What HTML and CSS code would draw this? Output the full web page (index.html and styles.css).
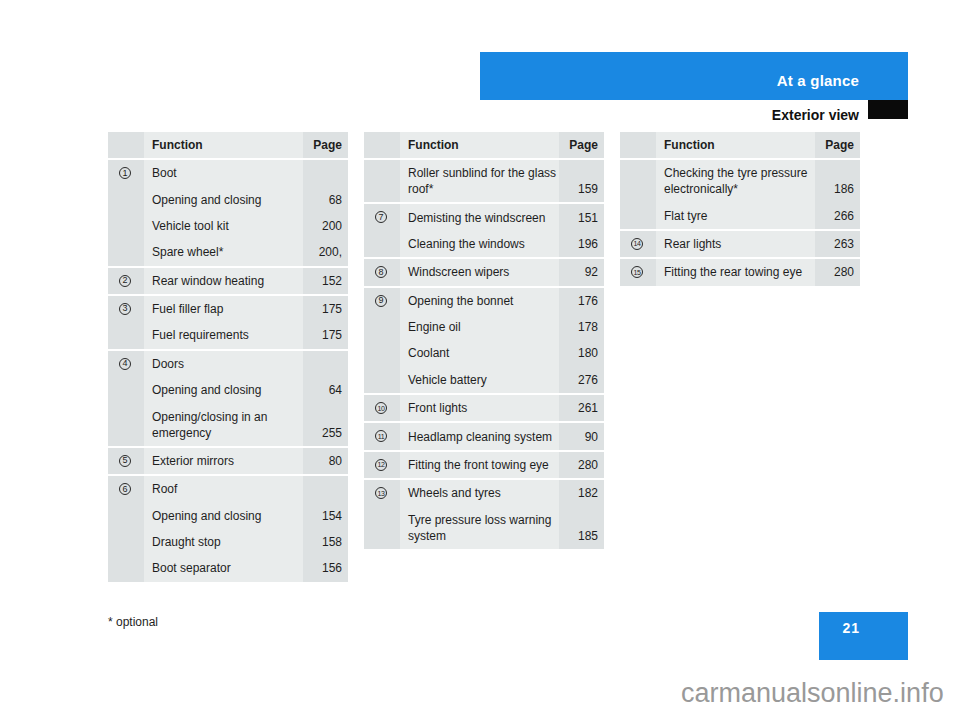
FILE: index.html
```html
<!DOCTYPE html>
<html lang="en">
<head>
<meta charset="utf-8">
<title>Exterior view</title>
<link rel="stylesheet" href="styles.css">
</head>
<body>
<div class="page">
  <div class="section-bar"><span class="section-title">At a glance</span></div>
  <div class="subhead"><span class="subhead-title">Exterior view</span><span class="subhead-mark"></span></div>

  <div class="tables">
    <div class="table">
      <div class="group head"><div class="fn">Function</div><div class="pg">Page</div></div>
      <div class="group">
        <div class="num"><span class="c">1</span></div>
        <div class="fn">Boot</div><div class="pg"></div>
        <div class="fn">Opening and closing</div><div class="pg">68</div>
        <div class="fn">Vehicle tool kit</div><div class="pg">200</div>
        <div class="fn">Spare wheel*</div><div class="pg">200,</div>
      </div>
      <div class="group">
        <div class="num"><span class="c">2</span></div>
        <div class="fn">Rear window heating</div><div class="pg">152</div>
      </div>
      <div class="group">
        <div class="num"><span class="c">3</span></div>
        <div class="fn">Fuel filler flap</div><div class="pg">175</div>
        <div class="fn">Fuel requirements</div><div class="pg">175</div>
      </div>
      <div class="group">
        <div class="num"><span class="c">4</span></div>
        <div class="fn">Doors</div><div class="pg"></div>
        <div class="fn">Opening and closing</div><div class="pg">64</div>
        <div class="fn">Opening/closing in an<br>emergency</div><div class="pg">255</div>
      </div>
      <div class="group">
        <div class="num"><span class="c">5</span></div>
        <div class="fn">Exterior mirrors</div><div class="pg">80</div>
      </div>
      <div class="group">
        <div class="num"><span class="c">6</span></div>
        <div class="fn">Roof</div><div class="pg"></div>
        <div class="fn">Opening and closing</div><div class="pg">154</div>
        <div class="fn">Draught stop</div><div class="pg">158</div>
        <div class="fn">Boot separator</div><div class="pg">156</div>
      </div>
    </div>

    <div class="table">
      <div class="group head"><div class="fn">Function</div><div class="pg">Page</div></div>
      <div class="group">
        <div class="fn">Roller sunblind for the glass<br>roof*</div><div class="pg">159</div>
      </div>
      <div class="group">
        <div class="num"><span class="c">7</span></div>
        <div class="fn">Demisting the windscreen</div><div class="pg">151</div>
        <div class="fn">Cleaning the windows</div><div class="pg">196</div>
      </div>
      <div class="group">
        <div class="num"><span class="c">8</span></div>
        <div class="fn">Windscreen wipers</div><div class="pg">92</div>
      </div>
      <div class="group">
        <div class="num"><span class="c">9</span></div>
        <div class="fn">Opening the bonnet</div><div class="pg">176</div>
        <div class="fn">Engine oil</div><div class="pg">178</div>
        <div class="fn">Coolant</div><div class="pg">180</div>
        <div class="fn">Vehicle battery</div><div class="pg">276</div>
      </div>
      <div class="group">
        <div class="num"><span class="c two">10</span></div>
        <div class="fn">Front lights</div><div class="pg">261</div>
      </div>
      <div class="group">
        <div class="num"><span class="c two">11</span></div>
        <div class="fn">Headlamp cleaning system</div><div class="pg">90</div>
      </div>
      <div class="group">
        <div class="num"><span class="c two">12</span></div>
        <div class="fn">Fitting the front towing eye</div><div class="pg">280</div>
      </div>
      <div class="group">
        <div class="num"><span class="c two">13</span></div>
        <div class="fn">Wheels and tyres</div><div class="pg">182</div>
        <div class="fn">Tyre pressure loss warning<br>system</div><div class="pg">185</div>
      </div>
    </div>

    <div class="table">
      <div class="group head"><div class="fn">Function</div><div class="pg">Page</div></div>
      <div class="group">
        <div class="fn">Checking the tyre pressure<br>electronically*</div><div class="pg">186</div>
        <div class="fn">Flat tyre</div><div class="pg">266</div>
      </div>
      <div class="group">
        <div class="num"><span class="c two">14</span></div>
        <div class="fn">Rear lights</div><div class="pg">263</div>
      </div>
      <div class="group">
        <div class="num"><span class="c two">15</span></div>
        <div class="fn">Fitting the rear towing eye</div><div class="pg">280</div>
      </div>
    </div>
  </div>

  <div class="footer">
    <span class="footnote">* optional</span>
    <span class="page-no">21</span>
  </div>
  <div class="watermark">carmanualsonline.info</div>
</div>
</body>
</html>
```

FILE: styles.css
```css
* { box-sizing: border-box; }
html, body { margin: 0; padding: 0; background: #fff; }
body {
  width: 960px;
  height: 712px;
  overflow: hidden;
  font-family: "Liberation Sans", Arial, sans-serif;
  color: #1e1e1e;
}
.page {
  position: relative;
  width: 960px;
  height: 712px;
  padding-top: 52px;
}
.section-bar {
  margin-left: 480px;
  width: 428px;
  height: 48px;
  background: #1a88e2;
  display: flex;
  justify-content: flex-end;
  align-items: flex-end;
  padding: 0 49px 11px 0;
}
.section-title {
  color: #fff;
  font-weight: bold;
  font-size: 15px;
  line-height: 17px;
  letter-spacing: 0.2px;
}
.subhead {
  display: flex;
  justify-content: flex-end;
  align-items: flex-start;
  margin-right: 52px;
  gap: 9px;
  height: 23px;
}
.subhead-title {
  font-weight: bold;
  font-size: 14px;
  line-height: 16px;
  padding-top: 7px;
  color: #111;
}
.subhead-mark {
  width: 40px;
  height: 19px;
  background: #0a0a0a;
}
.tables {
  display: flex;
  align-items: flex-start;
  gap: 16px;
  margin-top: 9px;
  padding-left: 108px;
  height: 454px;
}
.table {
  width: 240px;
  display: flex;
  flex-direction: column;
  gap: 2px;
  background: #fff;
}
.group {
  display: grid;
  grid-template-columns: 36px 159px 45px;
  background: linear-gradient(to right, #dde1e2 0, #dde1e2 36px, #e9ecec 36px, #e9ecec 195px, #dde1e2 195px);
  font-size: 12px;
  line-height: 16px;
}
.group .num { grid-column: 1; grid-row: 1; padding: 7px 0 0 11px; }
.group .fn { grid-column: 2; padding: 5.2px 0 5.2px 8px; white-space: nowrap; }
.group .pg { grid-column: 3; padding: 5.2px 6px 5.2px 0; text-align: right; align-self: end; }
.group.head { height: 26px; }
.group.head .fn, .group.head .pg { font-weight: bold; padding-top: 5px; padding-bottom: 5px; }
.c {
  display: flex;
  width: 12px;
  height: 12px;
  border: 1px solid #2a2a2a;
  border-radius: 50%;
  align-items: center;
  justify-content: center;
  font-size: 9px;
  line-height: 1;
  color: #1e1e1e;
}
.c.two { font-size: 7px; letter-spacing: -0.5px; }
.footer {
  display: flex;
  justify-content: space-between;
  align-items: flex-start;
  margin-top: 26px;
  padding-left: 108px;
  margin-right: 52px;
}
.footnote {
  font-size: 12px;
  line-height: 16px;
  padding-top: 2px;
}
.page-no {
  width: 89px;
  height: 48px;
  background: #1a88e2;
  color: #fff;
  font-weight: bold;
  font-size: 14px;
  line-height: 16px;
  letter-spacing: 1px;
  text-align: right;
  padding: 8px 48px 0 0;
}
.watermark {
  position: absolute;
  left: 681px;
  top: 680px;
  font-size: 27px;
  line-height: 27px;
  color: #999;
  white-space: nowrap;
}
```
